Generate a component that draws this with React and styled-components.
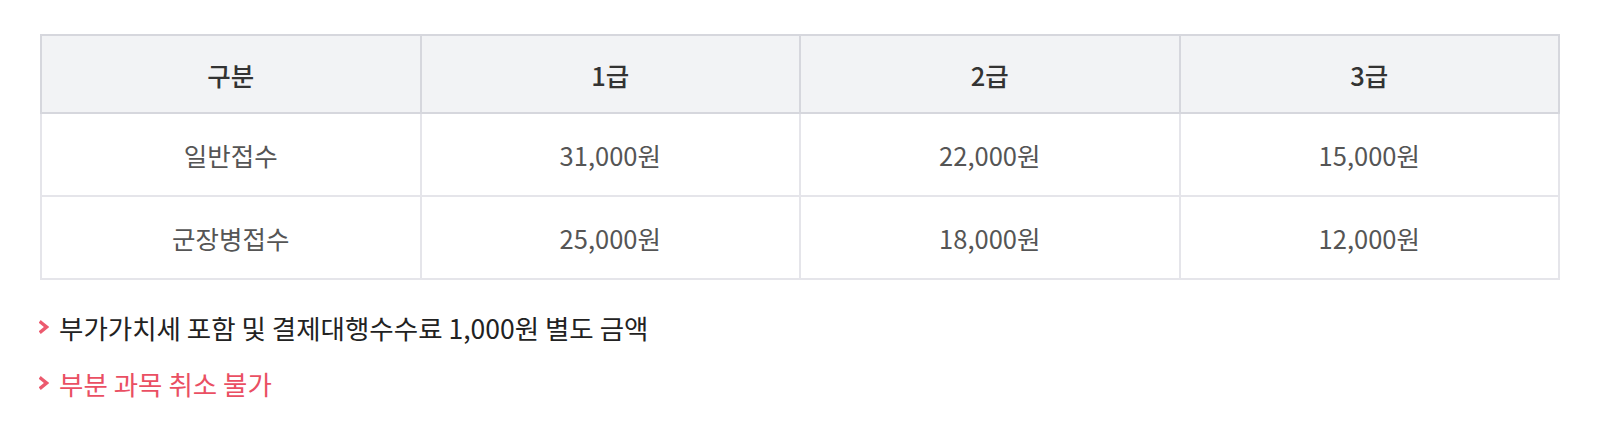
import React from "react";
import styled, { createGlobalStyle } from "styled-components";

const GlobalStyle = createGlobalStyle`
  body {
    margin: 0;
    background: #fff;
    font-family: "Noto Sans CJK KR", "Noto Sans", sans-serif;
  }
`;

const Wrapper = styled.div`
  padding: 34px 42px 0 40px;
`;

const Table = styled.table`
  width: 100%;
  border-collapse: collapse;
  table-layout: fixed;
  border: 2px solid #e5e5ea;
  th,
  td {
    text-align: center;
    font-size: 25.5px;
    padding: 0;
  }
  th {
    height: 76px;
    background-color: #f2f3f5;
    border: 2px solid #d6d7dd;
    color: #333;
    font-weight: 500;
  }
  td {
    height: 81px;
    border: 2px solid #e5e5ea;
    color: #555;
    font-weight: 400;
  }
`;

const Notes = styled.ul`
  list-style: none;
  margin: 29px 0 0;
  padding: 0;
  display: flex;
  flex-direction: column;
  gap: 20px;
`;

const Note = styled.li`
  display: flex;
  align-items: center;
  gap: 10px;
  height: 36px;
  font-size: 26.5px;
  color: ${(p) => (p.$warn ? "#ea4f63" : "#222")};
  svg {
    flex-shrink: 0;
    margin-left: -1px;
  }
`;

const Chevron = () => (
  <svg width="10" height="14" viewBox="0 0 10 14">
    <path
      d="M2 2.5 L7.5 7 L2 11.5"
      fill="none"
      stroke="#ec5a6e"
      strokeWidth="3.4"
      strokeLinecap="square"
    />
  </svg>
);

const header = ["구분", "1급", "2급", "3급"];
const rows = [
  ["일반접수", "31,000원", "22,000원", "15,000원"],
  ["군장병접수", "25,000원", "18,000원", "12,000원"],
];

const App = () => {
  return (
    <>
      <GlobalStyle />
      <Wrapper>
        <Table>
          <thead>
            <tr>
              {header.map((h) => (
                <th key={h}>{h}</th>
              ))}
            </tr>
          </thead>
          <tbody>
            {rows.map((row, i) => (
              <tr key={i}>
                {row.map((cell, j) => (
                  <td key={j}>{cell}</td>
                ))}
              </tr>
            ))}
          </tbody>
        </Table>
        <Notes>
          <Note>
            <Chevron />
            부가가치세 포함 및 결제대행수수료 1,000원 별도 금액
          </Note>
          <Note $warn>
            <Chevron />
            부분 과목 취소 불가
          </Note>
        </Notes>
      </Wrapper>
    </>
  );
};

export default App;
